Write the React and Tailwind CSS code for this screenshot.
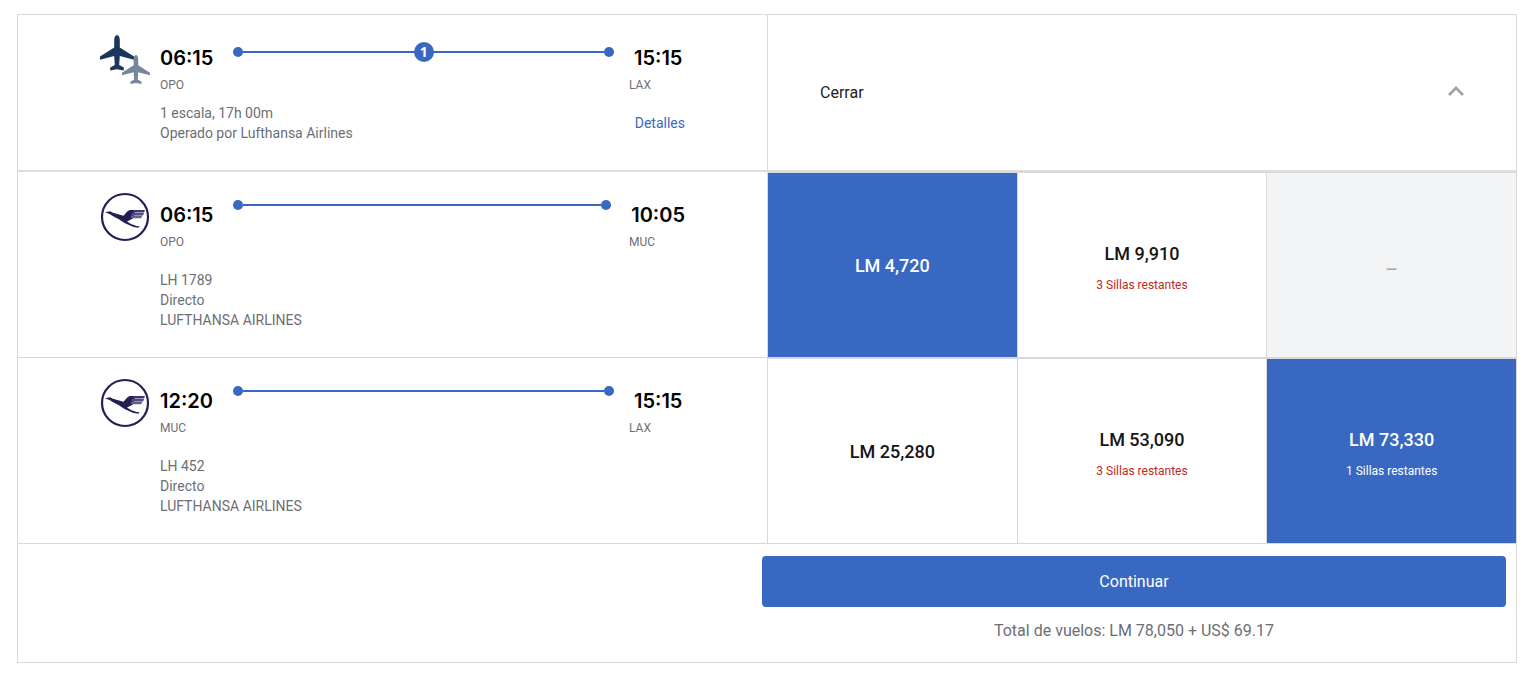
import clsx from 'clsx'

const segments = [
  {
    from: 'OPO',
    to: 'MUC',
    departure: '06:15',
    arrival: '10:05',
    flight: 'LH 1789',
    fares: [
      { price: 'LM 4,720', selected: true },
      { price: 'LM 9,910', seats: '3 Sillas restantes' },
      { price: null },
    ],
  },
  {
    from: 'MUC',
    to: 'LAX',
    departure: '12:20',
    arrival: '15:15',
    flight: 'LH 452',
    fares: [
      { price: 'LM 25,280' },
      { price: 'LM 53,090', seats: '3 Sillas restantes' },
      { price: 'LM 73,330', seats: '1 Sillas restantes', selected: true },
    ],
  },
]

const PLANE =
  'M17 0c1.500 0 2.800 2.200 2.800 5v7.500L34 21.500v3.200L19.800 21l-.6 9 4.600 2.600v2.800L17 34.200l-6.800 1.200v-2.800l4.600-2.600-.6-9L0 24.700v-3.200l14.200-9V5C14.200 2.200 15.500 0 17 0z'

function PlanesIcon() {
  return (
    <svg viewBox="0 0 50 50" className="w-[50px] h-[50px]" aria-hidden="true">
      <path d={PLANE} fill="#1b365d" />
      <path d={PLANE} fill="#76859c" transform="translate(22 20) scale(.82)" />
    </svg>
  )
}

function CraneIcon() {
  return (
    <svg viewBox="0 0 50 50" className="w-[50px] h-[50px]" aria-hidden="true">
      <circle cx="25" cy="25" r="23" fill="none" stroke="#221f55" strokeWidth="2.200" />
      <path
        d="M5 20.200l5-1 3 1.600 10.500 3 3.500-4 2.500-1.800h6L33 26.500l-6 3 4 2.600 5.500 2 3 .2-1 1.500-5-.7-9-4-6-4L14 24.800 9.500 22z"
        fill="#221f55"
      />
      <path d="M34 18h11l-1 2.600H32.500z" fill="#3c3a6c" />
      <path d="M32 21h12l-1 2.400H31z" fill="#4f4d7b" />
      <path d="M31 23.800h11.500l-1.500 2.400H31z" fill="#626089" />
    </svg>
  )
}

function Track({ stops }) {
  return (
    <div className={clsx('relative flex flex-1 items-center mx-5', stops ? 'h-[18px]' : 'h-[10px]')}>
      <span className="size-[10px] rounded-full bg-[#3868c2]" />
      <span className="h-[2px] flex-1 bg-[#3868c2]" />
      <span className="size-[10px] rounded-full bg-[#3868c2]" />
      {stops && (
        <span className="absolute inset-x-0 -top-px mx-auto size-5 rounded-full bg-[#3868c2] text-center font-['Open_Sans'] text-sm leading-5 font-bold text-white">
          {stops}
        </span>
      )}
    </div>
  )
}

function Itinerary({ icon, departure, arrival, from, to, stops, children }) {
  return (
    <div className="flex px-[82px] pb-[27px]">
      <div className="w-[60px] pt-5">{icon}</div>
      <div className="flex-1 pt-7">
        <div className="flex items-start font-['Inter'] text-xl leading-[30px] font-semibold text-black">
          <span>{departure}</span>
          <Track stops={stops} />
          <span className="min-w-[51px]">{arrival}</span>
        </div>
        <div className="mt-[2px] flex justify-between text-xs leading-5">
          <span>{from}</span>
          <span className="w-14">{to}</span>
        </div>
        {children}
      </div>
    </div>
  )
}

function Fare({ price, seats, selected }) {
  return (
    <button
      type="button"
      disabled={!price}
      className={clsx(
        'flex flex-col items-center justify-center border-t border-l border-[#d8d8d8]',
        seats ? 'pt-1' : 'pt-px',
        selected && 'bg-[#3868c2] text-white',
        !selected && price && 'bg-white text-[#151515]',
        !price && 'bg-[#f3f4f6] text-[#a6a6a6]'
      )}
    >
      {price ? (
        <span className="text-lg leading-6 font-medium">{price}</span>
      ) : (
        <span className="mt-2 text-xl leading-6">–</span>
      )}
      {seats && (
        <span className={clsx('mt-[11px] text-xs leading-4', selected ? 'text-white' : 'text-[#c02a22]')}>
          {seats}
        </span>
      )}
    </button>
  )
}

export default function App() {
  return (
    <main className="bg-white pt-[14px] pr-[21px] pb-[11px] pl-[17px] font-['Roboto',sans-serif] text-sm text-[#6c6e76]">
      <section className="border border-[#d8d8d8]">
        <div className="grid grid-cols-2 border-b-2 border-[#dcdcdc]">
          <Itinerary icon={<PlanesIcon />} departure="06:15" arrival="15:15" from="OPO" to="LAX" stops={1}>
            <div className="mt-2 flex justify-between leading-5">
              <p>
                1 escala, 17h 00m
                <br />
                Operado por Lufthansa Airlines
              </p>
              <a href="#detalles" className="pt-[10px] text-[#3868c2]">
                Detalles
              </a>
            </div>
          </Itinerary>
          <button
            type="button"
            className="flex items-center justify-between border-l border-[#d8d8d8] px-[52px] text-base text-[#222222]"
          >
            Cerrar
            <svg viewBox="0 0 16 10" className="mb-1 w-4 h-[10px]" fill="none" aria-hidden="true">
              <path d="M1 9l7-7 7 7" stroke="#a3a3a3" strokeWidth="2.800" />
            </svg>
          </button>
        </div>

        {segments.map((s) => (
          <div key={s.flight} className="grid grid-cols-2 border-b border-[#d8d8d8]">
            <Itinerary icon={<CraneIcon />} departure={s.departure} arrival={s.arrival} from={s.from} to={s.to}>
              <p className="mt-[18px] leading-5">
                {s.flight}
                <br />
                Directo
                <br />
                LUFTHANSA AIRLINES
              </p>
            </Itinerary>
            <div className="grid grid-cols-3">
              {s.fares.map((fare, i) => (
                <Fare key={i} {...fare} />
              ))}
            </div>
          </div>
        ))}

        <div className="flex justify-end px-[10px] pt-3 pb-[19px]">
          <div className="w-[calc(50%+5px)] text-center text-base">
            <button type="button" className="h-[51px] w-full rounded bg-[#3868c2] text-white">
              Continuar
            </button>
            <p className="mt-3 leading-6">Total de vuelos: LM 78,050 + US$ 69.17</p>
          </div>
        </div>
      </section>
    </main>
  )
}
